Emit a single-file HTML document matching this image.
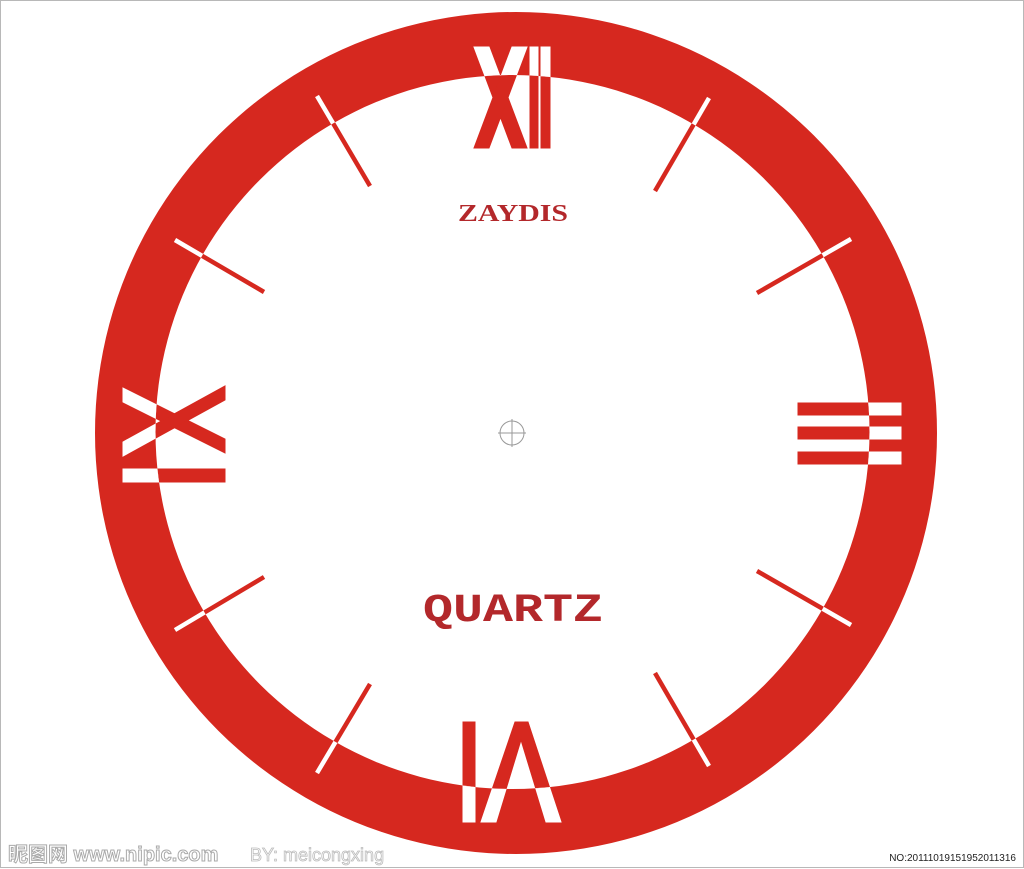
<!DOCTYPE html>
<html><head><meta charset="utf-8"><style>
html,body{margin:0;padding:0;background:#fff;}
body{width:1024px;height:869px;overflow:hidden;position:relative;}
</style></head><body>
<svg width="1024" height="869" viewBox="0 0 1024 869" xmlns="http://www.w3.org/2000/svg" style="position:absolute;left:0;top:0">
<defs>
<clipPath id="inner"><circle cx="512.5" cy="432" r="357"/></clipPath>
<clipPath id="ring"><path fill-rule="evenodd" clip-rule="evenodd" d="M516,12a421,421 0 1,0 0.01,0Z M512.5,75a357,357 0 1,0 0.01,0Z"/></clipPath>
<g id="num">
  <polygon points="474,47 489,47 527,148 512,148"/>
  <polygon points="512,47 527,47 489,148 474,148"/>
  <rect x="530" y="47" width="8" height="101"/>
  <rect x="541" y="47" width="9" height="101"/>
  <polygon points="123,388 123,402 225,453 225,439"/>
  <polygon points="225,386 225,400 123,456 123,442"/>
  <rect x="123" y="469" width="102" height="13"/>
  <rect x="798" y="403" width="103" height="12"/>
  <rect x="798" y="427" width="103" height="12"/>
  <rect x="798" y="452" width="103" height="12"/>
  <rect x="463" y="722" width="12" height="100"/>
  <polygon points="515,722 528,722 561,822 546,822 521,740 496,822 481,822"/>
  <g stroke-width="4.5" stroke-linecap="butt">
    <line x1="655" y1="191" x2="709" y2="98"/>
    <line x1="757" y1="293" x2="851" y2="239"/>
    <line x1="757" y1="571" x2="851" y2="625"/>
    <line x1="655" y1="673" x2="709" y2="766"/>
    <line x1="370" y1="684" x2="317" y2="773"/>
    <line x1="264" y1="577" x2="175" y2="630"/>
    <line x1="264" y1="292" x2="175" y2="240"/>
    <line x1="370" y1="186" x2="317" y2="96"/>
  </g>
</g>
</defs>
<rect x="0.5" y="0.5" width="1023" height="867" fill="#fff" stroke="#b8b8b8"/>
<path fill-rule="evenodd" fill="#d6281f" d="M516,12a421,421 0 1,0 0.01,0Z M512.5,75a357,357 0 1,0 0.01,0Z"/>
<g clip-path="url(#inner)" fill="#d6281f" stroke="#d6281f"><use href="#num"/></g>
<g clip-path="url(#ring)" fill="#fff" stroke="#fff"><use href="#num"/></g>
<text x="513" y="221" text-anchor="middle" font-family="Liberation Serif, serif" font-weight="bold" font-size="24" fill="#b3282b" textLength="110" lengthAdjust="spacingAndGlyphs">ZAYDIS</text>
<text x="513" y="621" text-anchor="middle" font-family="Liberation Mono, monospace" font-weight="bold" font-size="40" fill="#b3282b" textLength="180" lengthAdjust="spacingAndGlyphs">QUARTZ</text>
<circle cx="512" cy="433" r="12" fill="none" stroke="#999" stroke-width="1"/>
<line x1="498" y1="433" x2="526" y2="433" stroke="#999"/>
<line x1="512" y1="419" x2="512" y2="447" stroke="#999"/>
<text x="8" y="861" font-family="Liberation Sans, Noto Sans CJK SC, sans-serif" font-size="20" font-weight="bold" fill="#fff" stroke="#aaa" stroke-width="1">昵图网 www.nipic.com</text>
<text x="250" y="861" font-family="Liberation Sans, sans-serif" font-size="18" fill="#fff" stroke="#bbb" stroke-width="0.8">BY: meicongxing</text>
<text x="1016" y="861" text-anchor="end" font-family="Liberation Sans, sans-serif" font-size="10" fill="#222">NO:20111019151952011316</text>
</svg>
</body></html>
